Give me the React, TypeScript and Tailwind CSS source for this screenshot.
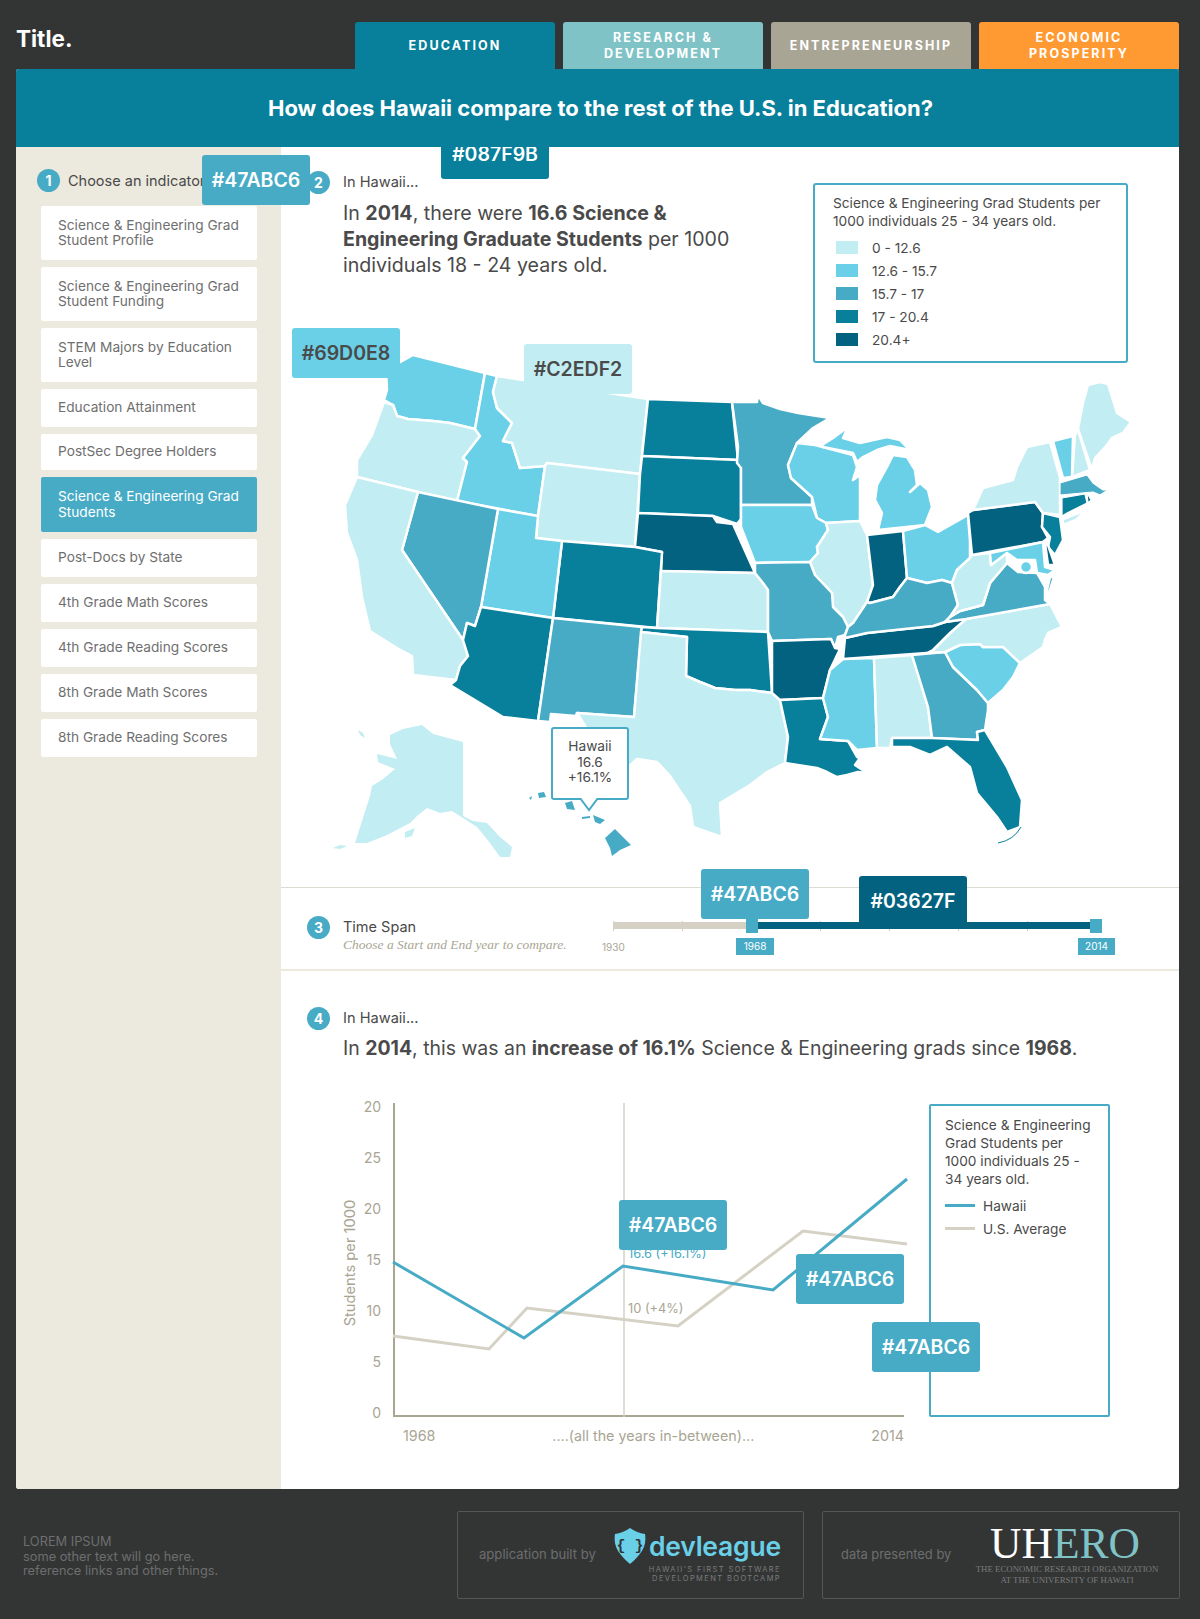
import React from 'react'

const C1 = '#C2EDF2'
const C2 = '#69D0E8'
const C3 = '#47ABC6'
const C4 = '#087F9B'
const C5 = '#03627F'

const tabs = [
  { label: 'EDUCATION', cls: 'bg-[#087F9B]' },
  { label: 'RESEARCH & DEVELOPMENT', cls: 'bg-[#80C3C7]' },
  { label: 'ENTREPRENEURSHIP', cls: 'bg-[#A9A594]' },
  { label: 'ECONOMIC PROSPERITY', cls: 'bg-[#FF9A33]' }
]

const indicators = [
  { label: 'Science & Engineering Grad Student Profile', h: 'h-[54px]' },
  { label: 'Science & Engineering Grad Student Funding', h: 'h-[54px]' },
  { label: 'STEM Majors by Education Level', h: 'h-[54px]' },
  { label: 'Education Attainment', h: 'h-[38px]' },
  { label: 'PostSec Degree Holders', h: 'h-[36px]' },
  { label: 'Science & Engineering Grad Students', h: 'h-[55px]', active: true },
  { label: 'Post-Docs by State', h: 'h-[38px]' },
  { label: '4th Grade Math Scores', h: 'h-[38px]' },
  { label: '4th Grade Reading Scores', h: 'h-[38px]' },
  { label: '8th Grade Math Scores', h: 'h-[38px]' },
  { label: '8th Grade Reading Scores', h: 'h-[38px]' }
]

const legend = [
  { label: '0 - 12.6', cls: 'bg-[#C2EDF2]' },
  { label: '12.6 - 15.7', cls: 'bg-[#69D0E8]' },
  { label: '15.7 - 17', cls: 'bg-[#47ABC6]' },
  { label: '17 - 20.4', cls: 'bg-[#087F9B]' },
  { label: '20.4+', cls: 'bg-[#03627F]' }
]

// page coordinates, the svg viewBox is offset to match
const states: [string, string][] = [
  [C2, '413,355 485,373 475,429 450,423 433,421 408,419 397,416 393,405 384,400 387,390 386,370'],
  [C1, '384,402 393,405 397,416 408,419 433,421 450,423 475,429 480,436 463,458 467,462 457,501 418,492 357,477 357,460 372,435'],
  [C2, '485,373 497,376 493,392 497,408 512,423 503,441 512,443 520,468 545,466 538,516 457,501 467,462 463,458 480,436 475,429'],
  [C1, '497,376 648,399 640,474 547,463 545,466 520,468 512,443 503,441 512,423 497,408 493,392'],
  [C1, '547,463 640,474 635,547 562,541 536,538 538,516 545,466'],
  [C4, '648,399 732,402 738,460 642,456'],
  [C4, '642,456 738,460 741,468 741,519 737,524 713,516 638,513 640,474'],
  [C5, '638,513 713,516 717,522 733,524 755,573 661,571 662,552 635,547'],
  [C4, '562,541 635,547 662,552 657,628 553,618'],
  [C1, '661,571 755,573 763,583 768,590 768,632 657,628'],
  [C2, '498,509 538,516 536,538 562,541 553,618 481,607'],
  [C3, '418,492 498,509 481,607 475,626 467,623 463,640 402,550'],
  [C1, '357,477 418,492 402,550 463,640 468,656 460,666 456,680 413,675 412,656 397,648 370,631 362,597 357,560 347,533 345,505'],
  [C4, '481,607 553,618 538,721 503,717 450,685 456,680 460,666 468,656 463,640 467,623 475,626'],
  [C3, '553,618 642,627 634,717 577,713 576,716 551,714 550,722 538,721'],
  [C4, '642,627 657,628 768,632 772,693 750,690 735,690 715,688 700,682 686,676 687,637 641,632'],
  [C1, '641,632 687,637 686,676 700,682 715,688 735,690 750,690 772,693 780,700 788,737 785,763 767,772 750,785 730,797 720,803 722,837 693,827 690,806 670,776 657,762 637,759 625,770 600,745 587,729 577,713 634,717'],
  [C3, '732,402 757,402 758,395 763,403 780,409 798,413 830,418 813,428 797,443 788,465 791,478 812,497 812,505 741,505 741,468 737,463 738,447'],
  [C2, '797,443 815,445 853,455 857,467 853,480 860,475 860,521 826,523 817,518 812,497 791,478 788,465'],
  [C2, '822,445 833,438 848,427 843,438 860,443 887,437 900,440 910,450 890,446 877,450 863,457 857,462 853,453 823,447'],
  [C2, '893,455 907,457 915,470 917,485 910,492 920,483 928,490 932,507 925,525 878,530 882,513 875,500 877,485 887,467'],
  [C2, '741,505 812,505 817,518 826,523 828,530 817,547 818,553 810,562 755,563 750,550 741,527'],
  [C1, '826,523 860,521 867,535 873,585 867,602 853,623 848,627 843,617 833,607 832,593 815,575 810,562 818,553 817,547 828,530'],
  [C5, '867,535 903,531 907,578 900,587 893,597 870,603 867,602 873,585'],
  [C2, '903,531 925,525 938,532 968,515 970,542 970,558 957,570 952,583 942,580 927,583 907,578'],
  [C3, '755,563 810,562 815,575 832,593 833,607 843,617 848,627 845,635 838,637 835,648 831,639 772,641 768,632 768,590 763,583 755,573'],
  [C5, '772,641 831,639 835,648 840,649 830,670 823,698 780,700 772,693'],
  [C4, '780,700 823,698 828,717 820,739 848,741 857,757 860,758 855,765 867,773 858,772 847,775 837,777 827,772 817,768 785,763 788,737'],
  [C2, '843,659 874,658 877,748 857,750 848,741 820,739 828,717 823,698 830,670'],
  [C1, '874,658 912,655 928,707 932,738 892,738 890,748 877,748'],
  [C3, '912,655 945,652 953,667 977,690 988,703 988,710 985,730 977,732 978,740 932,738 928,707'],
  [C4, '892,738 932,738 978,740 977,732 985,730 1007,767 1022,800 1020,827 1007,832 997,817 977,793 970,767 947,747 930,755 910,747 892,747'],
  [C2, '945,652 960,645 980,644 983,647 1003,647 1020,663 1013,677 1003,690 988,703 977,690 953,667'],
  [C1, '927,653 933,650 950,633 966,619 1050,604 1062,627 1048,633 1045,640 1043,647 1020,663 1003,647 983,647 980,644 960,645 945,652'],
  [C5, '845,638 867,633 933,626 945,622 966,619 950,633 933,650 927,653 843,659'],
  [C3, '848,627 853,623 867,602 870,603 893,597 900,587 907,578 927,583 942,580 952,583 958,605 950,617 945,622 933,626 867,633 845,638 845,635'],
  [C3, '945,622 950,617 960,611 983,605 990,583 1007,563 1018,572 1037,573 1045,587 1045,600 1050,604 966,619'],
  [C1, '958,605 952,583 957,570 970,558 972,555 990,553 991,565 1007,553 1007,563 990,583 983,605 960,611 950,617'],
  [C5, '968,513 973,510 1035,502 1043,513 1042,527 1048,538 1043,542 972,555'],
  [C1, '973,510 983,488 1013,480 1017,467 1027,447 1050,442 1060,478 1060,515 1043,513 1035,502'],
  [C4, '1043,513 1060,517 1063,540 1055,555 1048,547 1050,537 1042,527'],
  [C2, '990,553 1043,542 1045,567 1055,570 1048,575 1037,573 1035,560 1017,560 1007,553 991,565'],
  [C5, '1045,543 1048,545 1055,565 1048,565'],
  [C3, '1050,577 1054,577 1049,593 1047,590'],
  [C2, '1053,441 1073,436 1072,477 1063,478'],
  [C1, '1075,435 1078,430 1090,470 1072,477'],
  [C1, '1078,429 1083,403 1088,385 1100,382 1108,384 1117,413 1131,422 1123,433 1112,438 1107,445 1095,458 1092,470']
]

const northeast: [string, string][] = [
  [C1, '1063,520 1083,512 1076,519 1064,524'],
  [C4, '1062,498 1085,494 1087,503 1067,513 1062,516'],
  [C5, '1087,493 1091,500 1088,503'],
  [C3, '1060,483 1087,475 1093,483 1103,490 1108,490 1100,495 1093,492 1060,495']
]

const plain: [string, string][] = [
  [C1, '390,735 403,729 422,725 433,734 463,742 463,816 473,821 487,823 500,837 512,847 510,857 500,857 490,843 477,827 463,818 452,811 440,813 427,808 417,816 410,823 387,835 367,843 355,843 370,796 372,786 383,779 395,769 378,762 377,754 397,759 390,744'],
  [C1, '333,848 340,845 347,846 340,849'],
  [C1, '405,832 415,828 412,836 405,838'],
  [C1, '358,730 363,733 365,738 360,735'],
  [C3, '605,838 615,829 622,836 631,845 620,850 612,856 610,848'],
  [C3, '593,815 605,820 600,824 595,822'],
  [C3, '582,817 590,816 590,818 582,819'],
  [C3, '565,803 572,801 575,810 567,809'],
  [C3, '538,793 544,792 546,797 539,798'],
  [C3, '529,798 532,796 531,800']
]

const Step = ({ n, className = '' }: { n: number; className?: string }) => (
  <span
    className={`flex h-[23px] w-[23px] shrink-0 items-center justify-center rounded-full bg-[#47ABC6] text-[14px] font-bold text-white ${className}`}
  >
    {n}
  </span>
)

const Swatch = ({ text, className }: { text: string; className: string }) => (
  <div
    className={`absolute z-10 flex h-[50px] w-[108px] items-center justify-center rounded-[3px] pt-px text-[19.5px] font-semibold ${className}`}
  >
    {text}
  </div>
)

const App = () => {
  return (
    <div className="relative h-[1619px] w-[1200px] overflow-hidden bg-[#333535] font-['Inter',sans-serif] text-[#4A4A4A]">
      <header className="flex h-[69px] items-start justify-between pr-[21px] pl-4 pt-[22px]">
        <h1 className="mt-[2px] text-[22.5px] leading-[30px] font-bold text-white">Title.</h1>
        <nav className="flex gap-2">
          {tabs.map((tab) => (
            <div
              key={tab.label}
              className={`flex h-[47px] w-[200px] items-center justify-center rounded-t-[3px] px-4 text-center text-[12.5px] leading-[15.5px] font-bold tracking-[2.1px] text-white ${tab.cls}`}
            >
              {tab.label}
            </div>
          ))}
        </nav>
      </header>

      <main className="ml-4 flex h-[1420px] w-[1163px] flex-col overflow-hidden rounded-[3px] bg-white">
        <div className="relative z-20 flex h-[78px] items-center justify-center bg-[#087F9B] pl-[6px] text-[22px] font-bold text-white">
          How does Hawaii compare to the rest of the U.S. in Education?
        </div>

        <div className="flex flex-1">
          <aside className="w-[265px] shrink-0 bg-[#ECE9DF] pl-[25px] pt-[22px]">
            <div className="ml-[-4px] flex h-[23px] items-center gap-[8px] text-[14.5px] whitespace-nowrap">
              <Step n={1} />
              <span>Choose an indicator</span>
            </div>
            <ul className="mt-[14px] flex w-[216px] flex-col gap-[7px]">
              {indicators.map((item) => (
                <li
                  key={item.label}
                  className={`flex items-center rounded-[2px] pr-2 pl-[17px] text-[13.7px] leading-[15.5px] ${item.h} ${
                    item.active ? 'bg-[#47ABC6] text-white' : 'bg-white text-[#6F6F6F]'
                  }`}
                >
                  <span>{item.label}</span>
                </li>
              ))}
            </ul>
          </aside>

          <div className="flex min-w-0 flex-1 flex-col">
            <section className="h-[740px]">
              <div className="flex h-[200px] justify-between pr-[51px]">
                <div className="flex gap-[13px] pl-[26px] pt-[24px]">
                  <Step n={2} />
                  <div>
                    <p className="text-[14.6px] leading-[23px]">In Hawaii...</p>
                    <p className="mt-[6px] w-[400px] text-[19.6px] leading-[26px]">
                      In <b>2014</b>, there were <b>16.6 Science &amp; Engineering Graduate Students</b> per 1000 individuals 18 - 24 years old.
                    </p>
                  </div>
                </div>
                <div className="mt-[36px] h-[180px] w-[315px] rounded-[3px] border-2 border-[#47ABC6] px-[18px] pt-[9px] text-[13.7px] leading-[18px]">
                  <p>Science &amp; Engineering Grad Students per 1000 individuals 25 - 34 years old.</p>
                  <ul className="mt-[11px] flex flex-col gap-[10px] pl-[3px]">
                    {legend.map((row) => (
                      <li key={row.label} className="flex h-[13px] items-center gap-[14px]">
                        <span className={`h-[13px] w-[22px] ${row.cls}`} />
                        <span>{row.label}</span>
                      </li>
                    ))}
                  </ul>
                </div>
              </div>
              <svg viewBox="281 347 898 540" className="block h-[540px] w-[898px]">
                {states.map(([fill, pts], i) => (
                  <polygon key={i} points={pts} fill={fill} stroke="#fff" strokeWidth="2.5" strokeLinejoin="round" />
                ))}
                {northeast.map(([fill, pts], i) => (
                  <polygon key={i} points={pts} fill={fill} stroke="#fff" strokeWidth="1.2" strokeLinejoin="round" />
                ))}
                {plain.map(([fill, pts], i) => (
                  <polygon key={i} points={pts} fill={fill} />
                ))}
                <circle cx="1026" cy="567" r="6" fill={C2} stroke="#fff" strokeWidth="2.5" />
                <path d="M998 843 Q1014 840 1021 827" fill="none" stroke={C4} strokeWidth="1" />
              </svg>
            </section>

            <section className="flex h-[84px] border-y border-b-2 border-t-[#DDDBD2] border-b-[#ECE9DF] pl-[26px]">
              <div className="flex w-[291px] shrink-0 gap-[13px] pt-[28px]">
                <Step n={3} />
                <div>
                  <p className="text-[14.5px] leading-[22px]">Time Span</p>
                  <p className="font-['Liberation_Serif',serif] text-[13.5px] leading-[14px] whitespace-nowrap text-[#A9A594] italic">
                    Choose a Start and End year to compare.
                  </p>
                </div>
              </div>
              <div className="relative h-full w-[520px] text-[10px]">
                {[15, 84, 153, 222, 291, 360, 429, 498].map((x) => (
                  <span key={x} className="absolute top-[33px] h-[10px] w-px bg-[#CFCCBE]" style={{ left: x }} />
                ))}
                <div className="absolute top-[34px] left-[15px] h-[7px] w-[136px] bg-[#D5D2C5]" />
                <div className="absolute top-[34px] left-[151px] h-[7px] w-[348px] bg-[#03627F]" />
                <span className="absolute top-[31px] left-[148px] h-[14px] w-[12px] bg-[#47ABC6]" />
                <span className="absolute top-[31px] left-[492px] h-[14px] w-[12px] bg-[#47ABC6]" />
                <span className="absolute top-[52px] left-[4px] text-[#A9A594]">1930</span>
                <span className="absolute top-[50px] left-[138px] flex h-[17px] w-[38px] items-center justify-center bg-[#47ABC6] text-white">1968</span>
                <span className="absolute top-[50px] left-[480px] flex h-[17px] w-[37px] items-center justify-center bg-[#47ABC6] text-white">2014</span>
              </div>
            </section>

            <section className="flex-1 pl-[26px] pt-[36px]">
              <div className="flex gap-[13px]">
                <Step n={4} />
                <div>
                  <p className="text-[14.6px] leading-[23px]">In Hawaii...</p>
                  <p className="mt-[5px] text-[19.45px] leading-[26px]">
                    In <b>2014</b>, this was an <b>increase of 16.1%</b> Science &amp; Engineering grads since <b>1968</b>.
                  </p>
                </div>
              </div>

              <div className="mt-[42px] flex text-[#A9A594]">
                <div className="flex w-[86px] shrink-0">
                  <div className="relative w-[50px]">
                    <span className="absolute top-[149px] left-[-22px] block w-[130px] -rotate-90 text-center text-[14.7px] whitespace-nowrap">
                      Students per 1000
                    </span>
                  </div>
                  <div className="-mt-[4px] flex h-[322px] w-[24px] flex-col justify-between text-right text-[14px] leading-[16px]">
                    {['20', '25', '20', '15', '10', '5', '0'].map((v, i) => (
                      <span key={i}>{v}</span>
                    ))}
                  </div>
                </div>
                <div>
                  <div className="relative h-[314px] w-[511px] border-b-2 border-l-2 border-[#A9A594]">
                    <svg viewBox="393 1103 511 314" className="absolute top-0 left-[-2px] h-[314px] w-[511px] overflow-visible">
                      <line x1="624" y1="1103" x2="624" y2="1417" stroke="#D5D2C5" strokeWidth="1.5" />
                      <polyline points="393,1336 489,1349 527,1308 678,1326 803,1231 907,1244" fill="none" stroke="#D5D2C5" strokeWidth="3" />
                      <polyline points="393,1262 524,1338 623,1266 773,1290 907,1179" fill="none" stroke="#47ABC6" strokeWidth="3" />
                    </svg>
                    <span className="absolute top-[141px] left-[233px] text-[12.8px] text-[#47ABC6]">16.6 (+16.1%)</span>
                    <span className="absolute top-[196px] left-[233px] text-[12.8px]">10 (+4%)</span>
                  </div>
                  <div className="mt-[8px] flex justify-between pl-[10px] text-[14.3px]">
                    <span>1968</span>
                    <span>....(all the years in-between)...</span>
                    <span>2014</span>
                  </div>
                </div>
                <div className="mt-px ml-[25px] h-[313px] w-[181px] rounded-[2px] border-2 border-[#47ABC6] px-[14px] pt-[10px] text-[13.7px] leading-[18px] text-[#4A4A4A]">
                  <p>Science &amp; Engineering Grad Students per 1000 individuals 25 - 34 years old.</p>
                  <div className="mt-[6px] flex h-[23px] items-center gap-2">
                    <span className="h-[3px] w-[30px] bg-[#47ABC6]" />
                    Hawaii
                  </div>
                  <div className="flex h-[23px] items-center gap-2">
                    <span className="h-[3px] w-[30px] bg-[#D5D2C5]" />
                    U.S. Average
                  </div>
                </div>
              </div>
            </section>
          </div>
        </div>
      </main>

      <footer className="flex items-center pl-[23px] pr-[20px] pt-[22px]">
        <div className="w-[434px] pt-[4px] text-[12.8px] leading-[14.5px] text-[#6D6E6E]">
          <p>LOREM IPSUM</p>
          <p>some other text will go here.</p>
          <p>reference links and other things.</p>
        </div>
        <div className="flex h-[88px] w-[347px] items-center justify-between rounded-[2px] border border-[#555757] pr-[22px] pl-[21px] text-[13.1px] text-[#6D6E6E]">
          <span>application built by</span>
          <div className="flex flex-col items-end">
            <div className="flex items-center gap-[3px]">
              <svg viewBox="0 0 32 36" className="h-[36px] w-[32px]">
                <path d="M16 0 Q23 5 31 6 Q33 18 25 27 Q21 32 16 36 Q11 32 7 27 Q-1 18 1 6 Q9 5 16 0 Z" fill="#69D0E8" />
                <text x="16" y="22" textAnchor="middle" fontSize="15" fontWeight="700" fill="#333535" fontFamily="Liberation Mono, monospace">
                  {'{ }'}
                </text>
              </svg>
              <span className="text-[26.5px] leading-[30px] font-semibold tracking-[-0.2px] text-[#69D0E8]">devleague</span>
            </div>
            <p className="mt-[1px] text-right text-[7.5px] leading-[9px] tracking-[1.4px] text-[#7A7B7B]">
              HAWAII'S FIRST SOFTWARE
              <br />
              DEVELOPMENT BOOTCAMP
            </p>
          </div>
        </div>
        <div className="ml-[18px] flex h-[88px] w-[358px] items-center rounded-[2px] border border-[#555757] pr-[20px] pl-[18px] text-[12.9px] text-[#6D6E6E]">
          <span>data presented by</span>
          <div className="ml-auto flex w-[184px] flex-col items-center font-['Liberation_Serif',serif]">
            <div className="pr-[4px] text-[43.5px] leading-[38px]">
              <span className="text-white">UH</span>
              <span className="text-[#80C3C7]">ERO</span>
            </div>
            <p className="mt-[2px] text-center text-[8.8px] leading-[11px] whitespace-nowrap text-[#7A7B7B]">
              THE ECONOMIC RESEARCH ORGANIZATION
              <br />
              AT THE UNIVERSITY OF HAWAI'I
            </p>
          </div>
        </div>
      </footer>

      <Swatch text="#47ABC6" className="top-[155px] left-[202px] bg-[#47ABC6] text-white" />
      <Swatch text="#087F9B" className="top-[129px] left-[441px] items-end bg-[#087F9B] pb-[10px] text-white" />
      <Swatch text="#69D0E8" className="top-[328px] left-[292px] bg-[#69D0E8]" />
      <Swatch text="#C2EDF2" className="top-[344px] left-[524px] bg-[#C2EDF2]" />
      <Swatch text="#47ABC6" className="top-[869px] left-[701px] bg-[#47ABC6] text-white" />
      <Swatch text="#03627F" className="top-[876px] left-[859px] h-[46px] bg-[#03627F] text-white" />
      <Swatch text="#47ABC6" className="top-[1200px] left-[619px] bg-[#47ABC6] text-white" />
      <Swatch text="#47ABC6" className="top-[1254px] left-[796px] bg-[#47ABC6] text-white" />
      <Swatch text="#47ABC6" className="top-[1322px] left-[872px] bg-[#47ABC6] text-white" />

      <div className="absolute top-[727px] left-[551px] z-10 flex h-[73px] w-[78px] flex-col items-center justify-center rounded-[3px] border-2 border-[#47ABC6] bg-white pb-[2px] text-[13.7px] leading-[15.5px]">
        <span>Hawaii</span>
        <span>16.6</span>
        <span>+16.1%</span>
        <svg viewBox="0 0 20 14" className="absolute top-[69px] left-[26px] h-[14px] w-[20px]">
          <path d="M1 0 L10 12 L19 0" fill="#fff" stroke="#47ABC6" strokeWidth="2" />
        </svg>
      </div>
    </div>
  )
}

export default App
